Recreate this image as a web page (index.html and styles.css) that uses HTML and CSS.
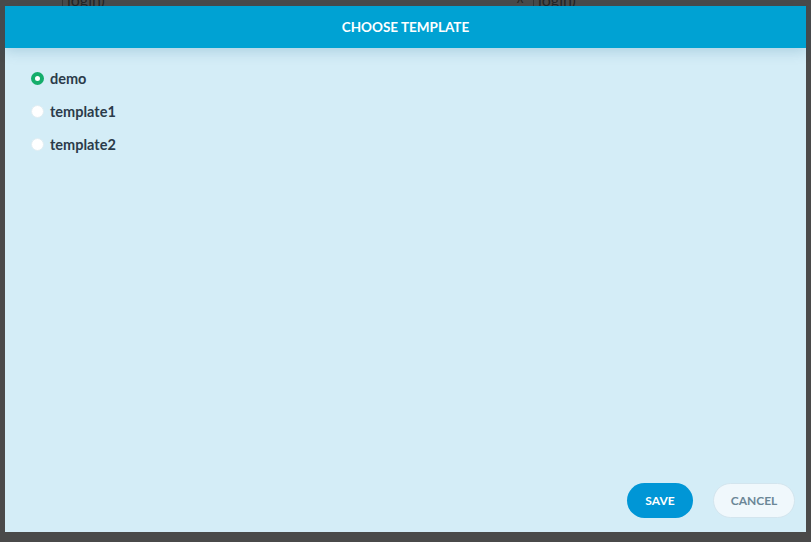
FILE: index.html
```html
<!DOCTYPE html>
<html>
<head>
<meta charset="utf-8">
<link rel="stylesheet" href="styles.css">
</head>
<body>
<div class="page">
  <div class="bg-row">
    <div class="bg-field"><span class="bg-text">login)</span></div>
    <div class="bg-field bg-field2"><span class="bg-caret">^</span><span class="bg-text">login)</span></div>
  </div>
</div>
<div class="modal">
  <div class="modal-header">CHOOSE TEMPLATE</div>
  <div class="modal-body">
    <label class="radio-row"><span class="radio checked"></span><span class="radio-label">demo</span></label>
    <label class="radio-row"><span class="radio"></span><span class="radio-label">template1</span></label>
    <label class="radio-row"><span class="radio"></span><span class="radio-label">template2</span></label>
  </div>
  <div class="modal-footer">
    <button class="btn btn-save">SAVE</button>
    <button class="btn btn-cancel">CANCEL</button>
  </div>
</div>
</body>
</html>
```
FILE: styles.css
```css
html, body {
  margin: 0;
  padding: 0;
  width: 811px;
  height: 542px;
  overflow: hidden;
  background: #4a4a4a;
  font-family: "Lato", "Liberation Sans", sans-serif;
}
.page {
  position: relative;
  height: 542px;
}
.bg-row {
  display: flex;
  height: 6px;
  overflow: hidden;
}
.bg-field {
  position: relative;
  flex-shrink: 0;
  margin-left: 62px;
  width: 440px;
  border-left: 1px solid #333;
  height: 20px;
  margin-top: -8px;
}
.bg-field2 {
  margin-left: 30px;
  width: 200px;
}
.bg-text {
  display: block;
  padding-left: 4px;
  font-size: 16px;
  line-height: 16px;
  color: #222;
}
.bg-caret {
  position: absolute;
  left: -18px;
  top: 2px;
  font-size: 14px;
  color: #222;
}
.modal {
  position: absolute;
  left: 5px;
  top: 6px;
  width: 801px;
  height: 526px;
  background: #d4edf7;
  display: flex;
  flex-direction: column;
}
.modal-header {
  height: 42px;
  background: #00a2d3;
  color: #fff;
  font-weight: 700;
  font-size: 13.5px;
  display: flex;
  align-items: center;
  justify-content: center;
  box-shadow: 0 4px 12px rgba(0, 90, 140, 0.18);
  position: relative;
  z-index: 1;
}
.modal-body {
  flex: 1;
  padding: 14px 26px 0;
  display: flex;
  flex-direction: column;
}
.radio-row {
  display: flex;
  align-items: center;
  height: 33px;
  gap: 6px;
}
.radio {
  width: 13px;
  height: 13px;
  border-radius: 50%;
  background: #fff;
  box-sizing: border-box;
  border: 1px solid #e2eef3;
}
.radio.checked {
  border: 4px solid #14ad6b;
  background: #fff;
}
.radio-label {
  font-size: 14.5px;
  font-weight: 700;
  color: #2b3b4a;
}
.modal-footer {
  display: flex;
  justify-content: flex-end;
  gap: 20px;
  padding: 0 11px 14px 0;
}
.btn {
  height: 35px;
  border-radius: 18px;
  font-family: "Lato", "Liberation Sans", sans-serif;
  font-size: 12px;
  font-weight: 700;
  box-sizing: border-box;
  cursor: pointer;
}
.btn-save {
  width: 66px;
  background: #0096d6;
  border: none;
  color: #fff;
}
.btn-cancel {
  width: 82px;
  background: #f0f8fc;
  border: 1px solid #d3e5ee;
  color: #6b8797;
}
```
